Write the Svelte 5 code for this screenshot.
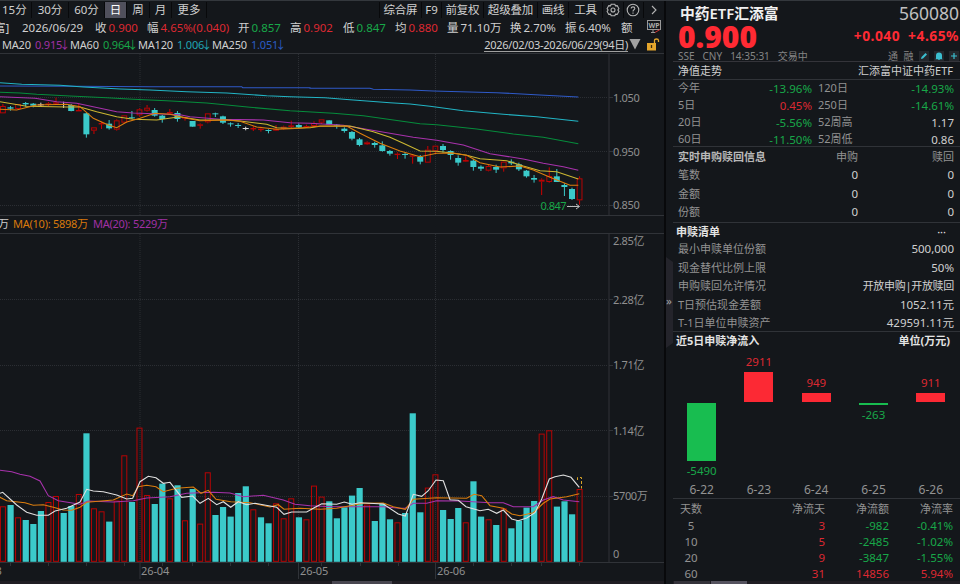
<script>
	// one vertical tick is a third of a pixel
	const T = 3;
	const STEP = 7.588;
	const cx = (i) => 2.9 + i * STEP;

	// kind, body top, body bottom, high, low (r = up, c = down, w = flat)
	const candles = [
		['r', 138, 160, 132, 160], ['c', 142, 146, 138, 152], ['r', 132, 147, 132, 147],
		['c', 129, 133, 126, 140], ['c', 131, 137, 129, 142], ['w', 133, 136, 128, 140],
		['r', 130, 134, 126, 138], ['r', 127, 130, 113, 133], ['w', 132, 135, 125, 144],
		['c', 135, 153, 132, 154], ['r', 150, 153, 130, 153], ['c', 160, 223, 158, 233],
		['r', 202, 212, 202, 222], ['r', 189, 193, 185, 207], ['c', 191, 205, 180, 209],
		['r', 181, 209, 178, 212], ['r', 166, 188, 166, 190], ['c', 172, 175, 153, 177],
		['r', 148, 166, 145, 170], ['r', 143, 152, 135, 155], ['c', 150, 167, 144, 170],
		['c', 167, 177, 165, 188], ['r', 156, 161, 147, 165], ['c', 159, 177, 153, 185],
		['r', 172, 175, 170, 182], ['c', 183, 200, 183, 200], ['r', 193, 196, 190, 206],
		['r', 160, 187, 160, 190], ['c', 160, 163, 158, 171], ['c', 169, 188, 167, 192],
		['c', 190, 193, 187, 200], ['c', 195, 198, 189, 204], ['w', 204, 207, 200, 211],
		['r', 204, 207, 198, 213], ['r', 206, 209, 200, 215], ['c', 210, 213, 208, 220],
		['r', 207, 212, 195, 213], ['r', 200, 207, 197, 209], ['r', 196, 201, 182, 205],
		['c', 195, 202, 190, 204], ['r', 198, 201, 194, 203], ['r', 189, 198, 184, 201],
		['r', 178, 188, 178, 192], ['c', 181, 194, 181, 194], ['c', 194, 196, 192, 206],
		['c', 206, 213, 202, 218], ['c', 216, 236, 213, 241], ['c', 238, 255, 234, 259],
		['r', 247, 253, 244, 255], ['c', 249, 255, 245, 263], ['c', 256, 273, 244, 275],
		['c', 273, 281, 270, 287], ['r', 281, 285, 277, 297], ['c', 282, 285, 277, 296],
		['r', 286, 290, 282, 311], ['c', 291, 305, 285, 313], ['r', 269, 308, 258, 308],
		['r', 257, 274, 257, 280], ['c', 258, 270, 252, 278], ['c', 273, 285, 271, 299],
		['c', 294, 308, 286, 317], ['r', 300, 305, 289, 306], ['c', 302, 321, 297, 332],
		['c', 320, 326, 316, 333], ['r', 318, 332, 314, 334], ['c', 321, 329, 314, 339],
		['r', 305, 325, 304, 335], ['c', 305, 310, 298, 315], ['c', 313, 328, 308, 333],
		['c', 332, 349, 330, 353], ['c', 354, 359, 345, 368], ['r', 359, 365, 355, 405],
		['r', 348, 366, 322, 368], ['c', 349, 366, 327, 366], ['c', 375, 381, 370, 408],
		['c', 387, 417, 383, 420], ['r', 355, 421, 349, 434]
	];

	const volumes = [
		506.3, 505, 517.3, 520, 524, 511, 502, 496, 513, 506, 494, 433.3, 508.3, 511.3, 521.6,
		500.5, 455.3, 502, 427.6, 495, 504, 483.6, 498.3, 485.3, 520.3, 489, 523.6, 472.3, 515,
		507, 516.6, 493, 486.3, 509.3, 517.3, 523.3, 503.3, 518.3, 498.3, 517.3, 519.3, 485.6,
		496.6, 501.3, 518.3, 507.3, 495.6, 488, 504.6, 521, 503.6, 519.3, 522.3, 513, 413.3,
		512.3, 487.6, 474.3, 510, 519, 508, 522.3, 481.3, 516.6, 519.3, 525, 508.3, 528.3, 520.6,
		507.6, 501, 433.6, 430.3, 506.6, 501.3, 514.3, 489
	];
	const upVolume = [
		0, 2, 6, 7, 10, 12, 13, 15, 16, 18, 19, 22, 24, 26, 27, 33, 36, 37, 38, 40, 41, 42, 48,
		52, 56, 57, 61, 64, 66, 71, 72, 76
	];

	const priceLines = [
		['blue', '0,78 225,79 450,80 725,80 728,83 930,83 930,85 1110,85 1120,88 1230,90 1300,93 1490,98 1620,105 1735,111'],
		['cyan', '0,68 65,73 180,76 250,81 320,85 360,87 450,90 560,95 680,99 800,107 870,110 975,113 1050,119 1170,128 1230,132 1290,139 1390,152 1510,163 1610,170 1735,184'],
		['green', '0,97 60,99 110,103 210,108 320,113 400,118 500,122 620,129 750,142 870,152 1000,160 1090,167 1260,191 1310,194 1430,207 1540,222 1630,232 1735,251'],
		['purple', '0,110 105,115 170,125 230,130 350,155 400,159 540,164 570,170 660,178 790,180 870,188 930,190 1030,196 1130,213 1240,232 1310,241 1390,255 1470,281 1570,297 1630,310 1690,320 1735,331'],
		['yellow', '0,125 80,139 200,141 240,141 290,155 350,170 400,178 470,180 540,170 600,180 680,180 720,183 800,193 830,203 870,205 930,203 960,199 1050,198 1120,215 1170,232 1210,250 1260,273 1310,274 1360,280 1400,286 1440,296 1520,302 1570,318 1620,332 1670,335 1735,357'],
		['orange', '0,148 50,150 110,135 200,133 240,140 280,175 325,195 350,203 380,186 420,175 465,160 510,163 560,175 600,182 680,180 720,184 770,201 830,208 870,206 900,205 960,198 1040,198 1080,220 1140,250 1200,273 1260,290 1310,280 1360,279 1400,286 1440,308 1500,321 1560,318 1600,330 1650,352 1710,376 1735,376']
	];

	const volumeLines = [
		['purple', '0,181 35,185 60,193 90,199 120,213 145,257 175,272 240,283 265,273 340,276 400,272 440,264 510,260 560,250 640,247 690,249 730,260 790,256 850,270 885,283 930,287 1000,290 1150,290 1200,295 1216,295 1240,280 1280,280 1310,272 1380,273 1470,278 1510,278 1540,290 1600,290 1630,270 1660,260 1690,270 1738,275'],
		['orange', '0,262 20,272 75,278 100,286 130,284 160,292 190,300 215,301 240,292 260,277 340,270 380,252 398,257 415,230 440,226 468,230 490,245 530,235 580,231 603,250 625,241 648,268 692,275 750,278 810,291 835,284 852,298 900,295 930,296 960,298 1010,295 1090,280 1150,279 1180,290 1216,298 1240,268 1310,263 1400,265 1422,253 1445,257 1470,287 1510,295 1535,312 1560,317 1600,308 1630,280 1650,267 1700,260 1738,251'],
		['white', '0,250 8,247 50,285 80,307 110,316 145,316 165,303 200,295 240,276 260,238 280,243 310,245 350,255 380,267 398,265 420,215 445,199 468,203 490,220 510,217 545,262 578,258 600,280 625,265 650,284 670,275 692,292 715,275 740,284 765,280 830,292 852,313 875,306 920,306 940,295 965,281 1010,283 1033,276 1056,283 1080,278 1150,282 1195,312 1216,318 1240,253 1265,259 1285,242 1308,210 1330,212 1350,269 1375,271 1398,290 1440,302 1465,298 1490,310 1510,300 1535,327 1555,332 1580,324 1605,308 1625,267 1648,207 1665,200 1690,195 1713,202 1738,232']
	];

	const scale = (points, top) =>
		points.split(' ').map((p) => {
			const [x, y] = p.split(',').map(Number);
			return `${(x / T).toFixed(1)},${(y / T + top).toFixed(1)}`;
		}).join(' ');

	const months = [140, 298.5, 435.5];
	const minorTicks = [10.5, 48.5, 86.5, 124.5, 162.5, 192.5, 230.5, 268.5, 321.5, 360.5, 398.5, 473.5, 511.5, 541.5, 579.5];

	const periods = [
		{ label: '15分', w: 32 },
		{ label: '30分', w: 37 },
		{ label: '60分', w: 36 },
		{ label: '日', w: 22, active: true },
		{ label: '周', w: 23 },
		{ label: '月', w: 22 },
		{ label: '更多', w: 35 }
	];
	const tools = [
		{ label: '综合屏', w: 42 },
		{ label: 'F9', w: 20 },
		{ label: '前复权', w: 42 },
		{ label: '超级叠加', w: 54 },
		{ label: '画线', w: 31 },
		{ label: '工具', w: 34 }
	];

	const stats = [
		{ k: '收', v: '0.900', c: 'red', x: 95 },
		{ k: '幅', v: '4.65%(0.040)', c: 'red', x: 147 },
		{ k: '开', v: '0.857', c: 'green', x: 238 },
		{ k: '高', v: '0.902', c: 'red', x: 290 },
		{ k: '低', v: '0.847', c: 'green', x: 343 },
		{ k: '均', v: '0.880', c: 'red', x: 395 },
		{ k: '量', v: '71.10万', c: '', x: 447 },
		{ k: '换', v: '2.70%', c: '', x: 510 },
		{ k: '振', v: '6.40%', c: '', x: 565 },
		{ k: '额', v: '', c: '', x: 621 }
	];

	const averages = [
		{ k: 'MA20', v: '0.915', c: 'purple', kw: 33, w: 68 },
		{ k: 'MA60', v: '0.964', c: 'green', kw: 33, w: 68 },
		{ k: 'MA120', v: '1.006', c: 'cyan', kw: 39, w: 74 },
		{ k: 'MA250', v: '1.051', c: 'blue', kw: 39, w: 74 }
	];

	const returns = [
		['今年', '-13.96%', 'green', '120日', '-14.93%', 'green'],
		['5日', '0.45%', 'red', '250日', '-14.61%', 'green'],
		['20日', '-5.56%', 'green', '52周高', '1.17', ''],
		['60日', '-11.50%', 'green', '52周低', '0.86', '']
	];

	const list = [
		['最小申赎单位份额', '500,000'],
		['现金替代比例上限', '50%'],
		['申购赎回允许情况', '开放申购|开放赎回'],
		['T日预估现金差额', '1052.11元'],
		['T-1日单位申赎资产', '429591.11元']
	];

	const flows = [
		{ day: '6-22', v: -5490, h: 58 },
		{ day: '6-23', v: 2911, h: 30 },
		{ day: '6-24', v: 949, h: 9 },
		{ day: '6-25', v: -263, h: 2 },
		{ day: '6-26', v: 911, h: 9 }
	];

	const totals = [
		['5', '3', '-982', '-0.41%'],
		['10', '5', '-2485', '-1.02%'],
		['20', '9', '-3847', '-1.55%'],
		['60', '31', '14856', '5.94%']
	];
</script>

<div class="terminal">
	<section class="main">
		<header class="toolbar">
			{#each periods as p}
				<span class="tab" class:active={p.active} style="width: {p.w}px">{p.label}</span>
			{/each}
			<span class="spacer"></span>
			{#each tools as t}
				<span class="tab tool" style="width: {t.w}px">{t.label}</span>
			{/each}
			<span class="tab tool icon">
				<svg width="14" height="14" viewBox="0 0 14 14">
					<path d="M5.200 1.200h3.600l.7 1.600 1.700-.2 1.700 3-1 1.400 1 1.400-1.700 3-1.700-.2-.7 1.600H5.200l-.7-1.600-1.700.2-1.700-3 1-1.400-1-1.400 1.700-3 1.700.2z" />
					<circle cx="7" cy="7" r="2" />
				</svg>
			</span>
			<span class="tab tool icon">
				<svg width="14" height="14" viewBox="0 0 14 14">
					<circle cx="7" cy="7" r="5.800" />
					<path d="M5.200 5.600c0-2.400 3.600-2.300 3.600-.1C8.800 6.800 7 6.800 7 8.400M7 9.500v1.200" />
				</svg>
			</span>
			<span class="tab tool icon">
				<svg width="14" height="14" viewBox="0 0 14 14"><path d="M5 3l4 4-4 4" /></svg>
			</span>
		</header>

		<div class="stats">
			<span class="cut">富]</span>
			<span class="date">2026/06/29</span>
			<div class="fields">
				{#each stats as s, i}
					<span class="stat" style="width: {(i < stats.length - 1 ? stats[i + 1].x : 633) - s.x}px">
						<span>{s.k}</span><b class={s.c}>{s.v}</b>
					</span>
				{/each}
			</div>
			<svg class="wp" width="16" height="15" viewBox="0 0 16 15">
				<rect x="1.500" y="1.500" width="13" height="9" fill="none" stroke="#999" />
				<path d="M5 13.500h4M7 11v2" stroke="#999" fill="none" />
				<path d="M9 13.500l5-3" stroke="#c33" fill="none" />
				<text x="8" y="8.600" text-anchor="middle" font-size="7" font-weight="700" fill="#aaa">WP</text>
			</svg>
		</div>

		<div class="averages">
			{#each averages as a}
				<span class="avg" style="width: {a.w}px">
					<span style="width: {a.kw}px">{a.k}</span><b class={a.c}>{a.v}<i>↓</i></b>
				</span>
			{/each}
			<span class="spacer"></span>
			<span class="range">2026/02/03-2026/06/29(94日)</span>
			<svg class="drop" width="12" height="11" viewBox="0 0 12 11"><path d="M.5 0h11L6 10.500z" fill="#a0a0a0" /></svg>
			<svg class="lock" width="15" height="13" viewBox="0 0 15 13">
				<rect x="1" y="5" width="9" height="7.500" fill="#e3a52c" />
				<path d="M8.500 5V2.500q0-1.500 2-1.500t2 1.500V4" fill="none" stroke="#e3a52c" stroke-width="1.300" />
				<path d="M5.500 7v3" stroke="#3a2a10" stroke-width="1.300" />
			</svg>
		</div>

		<svg class="price" width="664" height="161" viewBox="0 54 664 161">
			<g class="grid">
				<path d="M0 97.500H608M0 151.500H608M0 205.500H608" />
				{#each months as x}<path d="M{x} 54V215" />{/each}
			</g>
			<path class="axis" d="M609 54V215M609 97.500h4M609 151.500h4M609 205.500h4" />
			{#each candles as [kind, top, bottom, high, low], i}
				<g class="k-{kind}">
					{#if kind === 'r'}
						<path class="wick" d="M{cx(i)} {60 + high / T}V{60 + top / T}M{cx(i)} {60 + bottom / T}V{60 + low / T}" />
						<rect class="hollow" x={cx(i) - 2.4} y={60.5 + top / T} width="4.800" height={Math.max((bottom - top) / T - 1, 0.4)} />
					{:else}
						<path class="wick" d="M{cx(i)} {60 + high / T}V{60 + low / T}" />
						<rect class="solid" x={cx(i) - 3} y={60 + top / T} width="6" height={Math.max((bottom - top) / T, 1)} />
					{/if}
				</g>
			{/each}
			{#each priceLines as [color, points]}
				<polyline class="line {color}" points={scale(points, 60)} />
			{/each}
			<text class="low" x="540.500" y="210.300" textLength="26">0.847</text>
			<path class="arrow" d="M567 206.500h12M576 204l3.500 2.500-3.500 2.500" />
			<g class="scale">
				<text x="613" y="101.700">1.050</text>
				<text x="613" y="155.500">0.950</text>
				<text x="613" y="209.200">0.850</text>
			</g>
		</svg>

		<div class="legend">
			<span class="ten">万</span>
			<span class="orange">MA(10): 5898万</span>
			<span class="purple">MA(20): 5229万</span>
		</div>

		<svg class="volume" width="664" height="347" viewBox="0 234 664 347">
			<g class="grid">
				<path d="M0 299.500H608M0 365.500H608M0 430.500H608M0 496.500H608" />
				{#each months as x}<path d="M{x} 234V562" />{/each}
			</g>
			<path class="axis" d="M609 234V562M609 299.500h4M609 365.500h4M609 430.500h4M609 496.500h4" />
			{#each volumes as top, i}
				{#if upVolume.includes(i)}
					<rect class="vol-up" x={cx(i) - 2.5} y={top + 0.5} width="5" height={560.8 - top} />
				{:else}
					<rect class="vol-down" x={cx(i) - 3} y={top} width="6.200" height={561.8 - top} />
				{/if}
			{/each}
			{#each volumeLines as [color, points]}
				<polyline class="line {color}" points={scale(points, 410)} />
			{/each}
			<path class="estimate" d="M577.500 480v-2.500h4v11" />
			<path class="axis" d="M0 562.500H664" />
			{#each minorTicks as x}<path class="axis" d="M{x} 563v3" />{/each}
			{#each months as x}<path class="axis" d="M{x} 562v17" />{/each}
			<g class="scale">
				<text x="613" y="245">2.85亿</text>
				<text x="613" y="303.500">2.28亿</text>
				<text x="613" y="369">1.71亿</text>
				<text x="613" y="434.500">1.14亿</text>
				<text x="613" y="500">5700万</text>
				<text x="613" y="558">0</text>
				<text x="-4.500" y="574.500">3</text>
			</g>
			<g class="scale months">
				<text x="141" y="574.500">26-04</text>
				<text x="300" y="574.500">26-05</text>
				<text x="437" y="574.500">26-06</text>
			</g>
		</svg>
		<div class="scrollbar"><i></i></div>
	</section>

	<div class="gutter"><span>»</span></div>

	<aside class="side">
		<div class="quote">
			<div class="name"><strong>中药ETF汇添富</strong><span>560080</span></div>
			<div class="last"><strong>0.900</strong><span>+0.040</span><span>+4.65%</span></div>
			<div class="meta">
				<span>SSE</span><span>CNY</span><span>14:35:31</span><span>交易中</span>
				<span class="spacer"></span>
				<div class="flags">
					<span>通</span><span>融</span>
					<svg width="10" height="10" viewBox="0 0 10 10"><path d="M2 8l.5-2L6.500 2 8 3.500l-4 4z" /></svg>
					<svg width="10" height="10" viewBox="0 0 10 10"><path d="M2 7.500V4.500a3 3 0 0 1 6 0v3l.7.7H1.300zM4 8.500h2V9H4z" /></svg>
					<svg width="10" height="10" viewBox="0 0 10 10"><path d="M4.400 2h1.200v2.400H8v1.200H5.600V8H4.400V5.600H2V4.400h2.400z" /></svg>
				</div>
			</div>
		</div>

		<div class="nav-title"><span>净值走势</span><span>汇添富中证中药ETF</span></div>

		<div class="returns">
			{#each returns as [a, av, ac, b, bv, bc]}
				<span class="label">{a}</span><span class="num {ac}">{av}</span>
				<span class="label second">{b}</span><span class="num {bc}">{bv}</span>
			{/each}
		</div>

		<div class="realtime">
			<strong>实时申购赎回信息</strong><span class="label">申购</span><span class="label">赎回</span>
			{#each ['笔数', '金额', '份额'] as row}
				<span class="label first">{row}</span><span class="num">0</span><span class="num">0</span>
			{/each}
		</div>

		<div class="list">
			<div class="head"><strong>申赎清单</strong><span>···</span></div>
			{#each list as [k, v]}
				<div class="row"><span class="label">{k}</span><span class:num={/\d/.test(v)} class:terms={!/\d/.test(v)}>{v}</span></div>
			{/each}
		</div>

		<div class="flow">
			<div class="head"><strong>近5日申赎净流入</strong><strong>单位(万元)</strong></div>
			<div class="bars">
				{#each flows as f}
					<div class="col">
						<div class="upper">
							{#if f.v > 0}
								<span class="red">{f.v}</span><i class="up" style="height: {f.h}px"></i>
							{/if}
						</div>
						<div class="lower">
							{#if f.v < 0}
								<i class="down" style="height: {f.h}px"></i><span class="green">{f.v}</span>
							{/if}
						</div>
						<span class="day">{f.day}</span>
					</div>
				{/each}
			</div>
		</div>

		<div class="totals">
			<span class="label left">天数</span><span class="label">净流天</span><span class="label">净流额</span><span class="label">净流率</span>
			{#each totals as [d, n, amount, rate]}
				<span class="num label days">{d}</span><span class="num red">{n}</span>
				<span class="num {amount[0] === '-' ? 'green' : 'red'}">{amount}</span>
				<span class="num {rate[0] === '-' ? 'green' : 'red'}">{rate}</span>
			{/each}
		</div>
		<div class="scrollbar tabs"><i></i><i></i></div>
	</aside>
</div>

<style>
	:global(body) {
		background: #14171b;
	}

	.terminal {
		display: flex;
		width: 960px;
		height: 584px;
		box-sizing: border-box;
		overflow: hidden;
		border-top: 1px solid #34383d;
		background: #14171b;
		color: #d0d0d0;
		font-family: 'Noto Sans', 'Noto Sans CJK SC', sans-serif;
		font-size: 11.5px;
		white-space: nowrap;
	}

	b {
		font-weight: 400;
	}

	.spacer {
		flex: 1;
	}

	.main {
		display: flex;
		flex-direction: column;
		width: 664px;
		flex: none;
	}

	.toolbar {
		display: flex;
		height: 17px;
		padding-top: 1px;
		box-sizing: border-box;
		line-height: 16px;
	}

	.tab {
		flex: none;
		box-sizing: border-box;
		border-right: 1px solid #08090b;
		text-align: center;
	}

	.tab:first-child {
		text-align: left;
		padding-left: 2px;
	}

	.tab.active {
		background: #50505c;
		color: #fff;
	}

	.tool {
		border-right: 0;
		border-left: 1px solid #08090b;
		letter-spacing: -0.2px;
	}

	.tool.icon {
		width: 20.7px;
		display: flex;
		align-items: center;
		justify-content: center;
	}

	.icon svg {
		flex: none;
		fill: none;
		stroke: #b4b4b4;
		stroke-width: 1.1;
	}

	.stats {
		display: flex;
		height: 19px;
		line-height: 19px;
	}

	.cut {
		width: 22px;
		text-indent: -6px;
	}

	.date {
		width: 73px;
	}

	.fields {
		display: flex;
		width: 538px;
	}

	.stat {
		flex: none;
	}

	.stat b {
		margin-left: 2px;
	}

	.wp {
		margin: 1px 0 0 13px;
	}

	.averages {
		display: flex;
		height: 17px;
		padding-left: 2px;
		box-sizing: border-box;
		line-height: 16px;
		font-size: 11px;
		border-bottom: 1px solid #303338;
	}

	.avg {
		display: flex;
		flex: none;
		letter-spacing: -0.2px;
	}

	.avg > span {
		flex: none;
	}

	.avg i {
		display: inline-block;
		width: 4px;
		font-style: normal;
		text-indent: -3px;
	}

	.range {
		height: 14px;
		line-height: 15px;
		border-bottom: 1px solid #a0a0a0;
		letter-spacing: -0.27px;
	}

	.drop {
		margin: 2px 5px 0 1px;
	}

	.lock {
		margin: 1px 3px 0 0;
	}

	.price,
	.volume {
		display: block;
		flex: none;
	}

	.grid path {
		stroke: #2b2e33;
		stroke-dasharray: 1 1;
	}

	.axis {
		fill: none;
		stroke: #303338;
	}

	.scale text {
		fill: #8f8f8f;
		font-size: 11px;
		letter-spacing: -0.35px;
	}

	.months text {
		letter-spacing: -0.1px;
	}

	.k-r .wick {
		stroke: #c00;
		fill: none;
	}

	.hollow,
	.vol-up {
		fill: none;
		stroke: #b80404;
	}

	.k-c .wick {
		stroke: #3bcaca;
	}

	.k-c .solid,
	.vol-down {
		fill: #3bcaca;
	}

	.k-w .wick {
		stroke: #ddd;
	}

	.k-w .solid {
		fill: #ddd;
	}

	.estimate {
		fill: none;
		stroke: #d8a528;
		stroke-dasharray: 3 2;
	}

	.line {
		fill: none;
		stroke-width: 1.1;
	}

	.line.blue { stroke: #2f5ac8; }
	.line.cyan { stroke: #22b4c4; }
	.line.green { stroke: #068c3c; }
	.line.purple { stroke: #a832ac; }
	.line.yellow { stroke: #ccb732; }
	.line.orange { stroke: #dc7e0e; }
	.line.white { stroke: #e0e0e0; }

	.low {
		fill: #18a849;
		font-size: 11px;
	}

	.arrow {
		fill: none;
		stroke: #bbb;
	}

	.legend {
		display: flex;
		gap: 5px;
		height: 19px;
		box-sizing: border-box;
		border-top: 1px solid #303338;
		border-bottom: 1px solid #303338;
		font-size: 11px;
		line-height: 16px;
		letter-spacing: -0.25px;
	}

	.ten {
		width: 8px;
		text-indent: -2px;
	}

	.scrollbar {
		height: 3px;
		margin-top: auto;
		background: #1f1d23;
		display: flex;
	}

	.scrollbar i {
		width: 60px;
		margin-left: 332px;
		background: #484650;
	}

	.gutter {
		width: 9px;
		flex: none;
		box-sizing: border-box;
		border-left: 2px solid #08090b;
		display: flex;
		align-items: center;
	}

	.gutter span {
		width: 8px;
		height: 91px;
		margin-top: 20px;
		line-height: 87px;
		background: #24242b;
		color: #a0a0a0;
		clip-path: polygon(0 0, 100% 5px, 100% 86px, 0 100%);
	}

	.side {
		display: flex;
		flex-direction: column;
		flex: 1;
		width: 287px;
	}

	.side > div {
		box-sizing: border-box;
		flex: none;
	}

	.quote {
		height: 61px;
		padding: 0 1px 0 5px;
		border-bottom: 1px solid #34343a;
	}

	.name {
		display: flex;
		justify-content: space-between;
		height: 24px;
		padding-left: 2px;
		line-height: 25px;
		font-size: 14.8px;
		color: #f0f0f0;
	}

	.name strong {
		font-weight: 600;
	}

	.name span {
		font-size: 17.5px;
		line-height: 24px;
		color: #c0c0c0;
	}

	.last {
		display: flex;
		height: 23px;
		line-height: 24px;
		color: #ff2a33;
		font-weight: 700;
		font-size: 13.8px;
	}

	.last strong {
		flex: 1;
		font-size: 30px;
	}

	.last span {
		margin-left: 8px;
		line-height: 21px;
		letter-spacing: 0.5px;
	}

	.meta {
		display: flex;
		gap: 8px;
		height: 14px;
		line-height: 16px;
		font-size: 10px;
		color: #858585;
	}

	.flags {
		display: flex;
		gap: 5px;
	}

	.flags span {
		width: 10.5px;
	}

	.meta svg {
		flex: none;
		margin-top: 3px;
		background: #24272c;
		fill: #3bbfd0;
	}

	.nav-title {
		display: flex;
		justify-content: space-between;
		height: 18px;
		line-height: 18px;
		padding: 0 7px 0 5px;
		font-size: 11px;
		border-bottom: 1px solid #303338;
	}

	.label {
		color: #929292;
	}

	.returns {
		display: grid;
		grid-template-columns: 50px 84px 60px 1fr;
		grid-auto-rows: 17px;
		height: 67px;
		padding: 0 6px 0 5px;
		line-height: 16px;
		font-size: 11px;
		border-bottom: 1px solid #303338;
	}

	.second {
		padding-left: 6px;
	}

	.num {
		text-align: right;
		font-size: 11.5px;
	}

	.returns .num {
		line-height: 17px;
	}

	.realtime {
		display: grid;
		grid-template-columns: 120px 60px 1fr;
		grid-template-rows: 18px;
		grid-auto-rows: 18.5px;
		height: 76px;
		padding: 0 6px 0 5px;
		line-height: 19px;
		font-size: 11px;
		text-align: right;
		border-bottom: 1px solid #303338;
	}

	.realtime strong,
	.first {
		text-align: left;
	}

	.realtime strong {
		color: #b8b8b8;
	}

	.list {
		height: 109px;
		padding: 0 6px 0 5px;
		border-bottom: 1px solid #303338;
		font-size: 11px;
	}

	.head,
	.row {
		display: flex;
		justify-content: space-between;
		height: 18.5px;
		line-height: 18.5px;
	}

	.head {
		height: 17px;
		margin-left: -2px;
		padding-right: 8px;
		line-height: 17px;
		font-size: 11px;
		color: #e4e4e4;
	}

	.terms {
		letter-spacing: -0.3px;
	}

	.flow {
		height: 167px;
		padding: 0 6px 0 5px;
		border-bottom: 1px solid #303338;
	}

	.flow .head {
		padding-right: 4px;
	}

	.bars {
		display: flex;
		width: 287px;
		margin-left: -5px;
	}

	.col {
		width: 57.3px;
		text-align: center;
		line-height: 18px;
	}

	.upper {
		display: flex;
		flex-direction: column;
		justify-content: flex-end;
		align-items: center;
		height: 53px;
	}

	.upper span {
		margin-bottom: 1px;
	}

	.lower {
		display: flex;
		flex-direction: column;
		align-items: center;
		height: 79px;
		box-sizing: border-box;
		padding-top: 0.5px;
	}

	.lower span {
		margin-top: 1.5px;
	}

	.up,
	.down {
		width: 29px;
		background: #fc2934;
	}

	.down {
		background: #18bd50;
	}

	.day {
		color: #929292;
		font-size: 12px;
	}

	.totals {
		display: grid;
		grid-template-columns: 80px 67px 64px 1fr;
		grid-template-rows: 17px;
		grid-auto-rows: 16px;
		height: 82px;
		padding: 1px 7px 0 5px;
		line-height: 17px;
		font-size: 11px;
		text-align: right;
	}

	.totals .left {
		text-align: left;
		padding-left: 2px;
	}

	.totals .days {
		width: 26px;
		text-align: center;
	}

	.scrollbar.tabs i {
		width: 36px;
		margin-left: 1px;
		background: #34323a;
	}

	.scrollbar.tabs i + i {
		background: #55535f;
	}

	.red { color: #dd2932; }
	.green { color: #18a849; }
	.purple { color: #a030a4; }
	.cyan { color: #20a5b4; }
	.blue { color: #2b5cc4; }
	.orange { color: #d9790c; }
</style>
